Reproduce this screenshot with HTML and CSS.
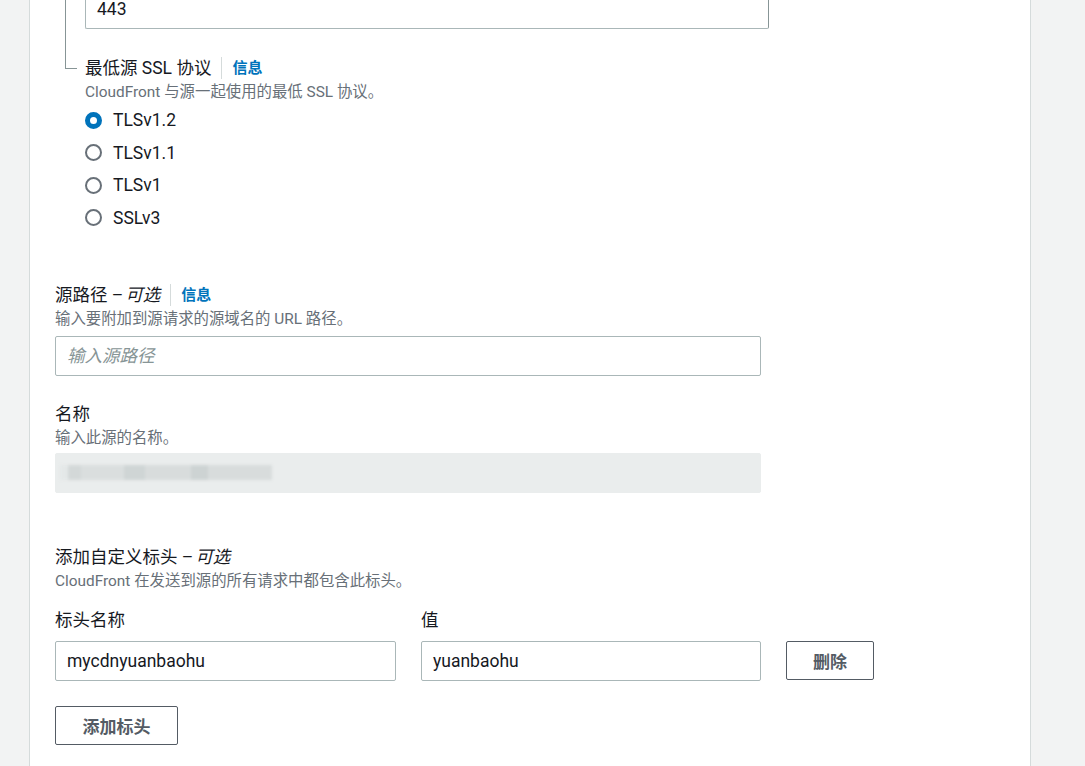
FILE: index.html
```html
<!DOCTYPE html>
<html lang="zh-CN">
<head>
<meta charset="utf-8">
<link rel="stylesheet" href="styles.css">
</head>
<body>
<div class="page">
  <div class="panel">
    <div class="nested">
      <div class="input port">443</div>
      <div class="field ssl">
        <div class="label">最低源 SSL 协议<span class="info">信息</span></div>
        <div class="desc">CloudFront 与源一起使用的最低 SSL 协议。</div>
        <div class="radios">
          <div class="radio-row"><span class="radio checked"></span><span>TLSv1.2</span></div>
          <div class="radio-row"><span class="radio"></span><span>TLSv1.1</span></div>
          <div class="radio-row"><span class="radio"></span><span>TLSv1</span></div>
          <div class="radio-row"><span class="radio"></span><span>SSLv3</span></div>
        </div>
      </div>
    </div>

    <div class="field path">
      <div class="label">源路径 – <i>可选</i><span class="info">信息</span></div>
      <div class="desc">输入要附加到源请求的源域名的 URL 路径。</div>
      <div class="input wide placeholder">输入源路径</div>
    </div>

    <div class="field name">
      <div class="label">名称</div>
      <div class="desc">输入此源的名称。</div>
      <div class="input wide disabled"><span class="blur"></span></div>
    </div>

    <div class="field headers">
      <div class="label">添加自定义标头 – <i>可选</i></div>
      <div class="desc">CloudFront 在发送到源的所有请求中都包含此标头。</div>
      <div class="header-grid">
        <div class="label">标头名称</div>
        <div class="label">值</div>
        <div></div>
        <div class="input">mycdnyuanbaohu</div>
        <div class="input">yuanbaohu</div>
        <button class="btn">删除</button>
      </div>
      <button class="btn add">添加标头</button>
    </div>
  </div>
</div>
</body>
</html>
```
FILE: styles.css
```css
html, body {
  margin: 0;
  padding: 0;
  background: #f2f3f3;
  font-family: "Roboto", "Noto Sans CJK SC", sans-serif;
  color: #16191f;
}
.page {
  height: 766px;
  overflow: hidden;
}
.panel {
  display: flow-root;
  margin-left: 29px;
  width: 1002px;
  height: 766px;
  background: #fff;
  border-left: 1px solid #d5dbdb;
  border-right: 1px solid #d5dbdb;
  box-sizing: border-box;
  padding: 0 25px;
}
.nested {
  position: relative;
  margin-left: 10px;
  padding-left: 20px;
  margin-top: -11px;
}
.nested::before {
  content: "";
  position: absolute;
  left: 0;
  top: 0;
  width: 11px;
  height: 79px;
  border-left: 1px solid #879596;
  border-bottom: 1px solid #879596;
}
.input {
  box-sizing: border-box;
  height: 40px;
  border: 1px solid #aab7b8;
  border-radius: 2px;
  background: #fff;
  font-size: 17.5px;
  line-height: 38px;
  padding: 0 11px;
  color: #16191f;
  white-space: nowrap;
}
.input.port {
  width: 684px;
  border-right-color: #879596;
}
.input.wide {
  width: 706px;
}
.input.placeholder {
  color: #879596;
  font-style: italic;
}
.input.disabled {
  background: #eaeded;
  border-color: #eaeded;
  display: flex;
  align-items: center;
  padding-left: 4px;
}
.blur {
  display: block;
  width: 212px;
  height: 15px;
  background: linear-gradient(90deg, #e4e8e8 0 4%, #d3d8d8 4% 10%, #dadede 10% 30%, #cfd5d5 30% 40%, #d8dcdc 40% 62%, #cdd3d3 62% 70%, #d8dcdc 70% 100%);
  filter: blur(1.5px);
}
.label {
  font-size: 17.5px;
  line-height: 22px;
  display: flex;
  align-items: center;
}
.label i {
  font-style: italic;
  margin-left: 2px;
}
.info {
  font-size: 15px;
  font-weight: 700;
  color: #0073bb;
  border-left: 1px solid #d5dbdb;
  margin-left: 10px;
  padding-left: 10px;
  line-height: 22px;
}
.desc {
  font-size: 15.4px;
  line-height: 20px;
  color: #687078;
  margin-top: 3px;
}
.field.ssl {
  padding-top: 28px;
}
.radios {
  margin-top: 6px;
  display: flex;
  flex-direction: column;
  gap: 8.6px;
}
.radio-row {
  display: flex;
  align-items: center;
  gap: 11px;
  font-size: 17.5px;
  line-height: 24px;
}
.radio {
  width: 17px;
  height: 17px;
  box-sizing: border-box;
  border-radius: 50%;
  border: 2px solid #687078;
}
.radio.checked {
  border: 5.5px solid #0073bb;
}
.field.path {
  margin-top: 54px;
}
.field.path .input {
  margin-top: 7px;
}
.field.name {
  margin-top: 27px;
}
.field.name .input {
  margin-top: 5px;
}
.field.headers {
  margin-top: 53px;
}
.header-grid {
  display: grid;
  grid-template-columns: 341px 340px 88px;
  column-gap: 25px;
  row-gap: 10px;
  margin-top: 18px;
  align-items: center;
}
.btn {
  box-sizing: border-box;
  height: 39px;
  background: #fff;
  border: 1px solid #545b64;
  border-radius: 2px;
  color: #545b64;
  font-family: "Roboto", "Noto Sans CJK SC", sans-serif;
  font-weight: 700;
  font-size: 17px;
  padding: 0;
}
.btn.add {
  width: 123px;
  margin-top: 25px;
}
```
